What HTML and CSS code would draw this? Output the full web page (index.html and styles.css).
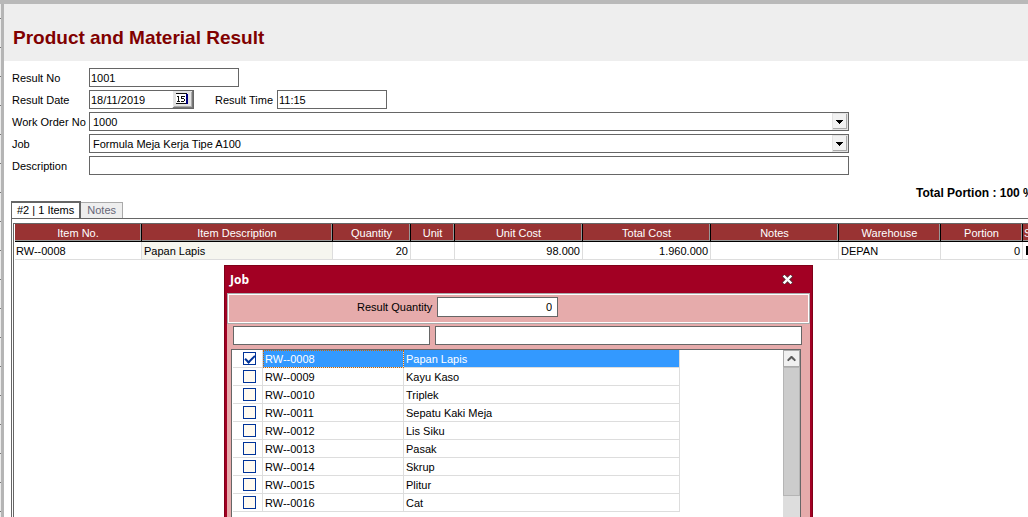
FILE: index.html
```html
<!DOCTYPE html>
<html lang="id">
<head>
<meta charset="utf-8">
<title>Product and Material Result</title>
<link rel="stylesheet" href="styles.css">
</head>
<body>
<div class="window">
  <header class="heading"><h1>Product and Material Result</h1></header>
  <main class="content">
    <form class="form">
      <div class="row">
        <label class="label" for="no">Result No</label>
        <input class="field field-no" id="no" value="1001">
      </div>
      <div class="row">
        <label class="label" for="date">Result Date</label>
        <div class="date">
          <input class="field" id="date" value="18/11/2019">
          <button class="calendar" type="button" aria-label="Pick date">
            <svg width="21" height="17" viewBox="0 0 21 17" shape-rendering="crispEdges">
              <path d="M0 0h21v17H0z" fill="#e4e4e4"/>
              <path d="M0 0h1v16H0z" fill="#fff"/>
              <path d="M20 0h1v17H1v-1h19z" fill="#777"/>
              <path d="M19 1h1v15H2v-1h17z" fill="#aaa"/>
              <path d="M4 2h10v10H4z" fill="#fff"/>
              <path d="M4 2h11v1H4zM4 12h11v1H4z" fill="#111"/>
              <path d="M14 3h2v10h-2z" fill="#000080"/>
              <path d="M6 5h1v5h1v1H5v-1h1V6H5V5zM9 5h4v1h-3v1h2v1h1v2h-1v1H9v-1h3V8H9z" fill="#111"/>
            </svg>
          </button>
        </div>
        <label class="label-time" for="time">Result Time</label>
        <input class="field field-time" id="time" value="11:15">
      </div>
      <div class="row">
        <label class="label" for="order">Work Order No</label>
        <div class="combo">
          <select class="field" id="order"><option>1000</option></select>
          <svg class="arrow" width="16" height="17" viewBox="0 0 16 17" shape-rendering="crispEdges"><path d="M0 0h16v17H0z" fill="#e3e3e3"/><path d="M1 1h13v14H1z" fill="#f2f2f2"/><path d="M14 1h1v15H1v-1h13z" fill="#aaa"/><path d="M4 7h7v1h-1v1H9v1H8v1H7v-1H6V9H5V8H4z" fill="#000"/></svg>
        </div>
      </div>
      <div class="row">
        <label class="label" for="job">Job</label>
        <div class="combo">
          <select class="field" id="job"><option>Formula Meja Kerja Tipe A100</option></select>
          <svg class="arrow" width="16" height="17" viewBox="0 0 16 17" shape-rendering="crispEdges"><path d="M0 0h16v17H0z" fill="#e3e3e3"/><path d="M1 1h13v14H1z" fill="#f2f2f2"/><path d="M14 1h1v15H1v-1h13z" fill="#aaa"/><path d="M4 7h7v1h-1v1H9v1H8v1H7v-1H6V9H5V8H4z" fill="#000"/></svg>
        </div>
      </div>
      <div class="row">
        <label class="label" for="desc">Description</label>
        <input class="field field-wide" id="desc">
      </div>
    </form>
    <p class="total">Total Portion : 100 %</p>
    <div class="tabs" role="tablist">
      <button class="tab tab-active" role="tab" aria-selected="true">#2 | 1 Items</button>
      <button class="tab" role="tab" aria-selected="false">Notes</button>
    </div>
    <section class="panel">
      <div class="grid">
        <table class="items">
          <colgroup><col class="c-no"><col class="c-desc"><col class="c-qty"><col class="c-unit"><col class="c-cost"><col class="c-cost"><col class="c-cost"><col class="c-wh"><col class="c-portion"><col class="c-last"></colgroup>
          <thead><tr><th>Item No.</th><th>Item Description</th><th>Quantity</th><th>Unit</th><th>Unit Cost</th><th>Total Cost</th><th>Notes</th><th>Warehouse</th><th>Portion</th><th class="cut">S</th></tr></thead>
          <tbody><tr><td>RW--0008</td><td class="tint">Papan Lapis</td><td class="num">20</td><td></td><td class="num">98.000</td><td class="num">1.960.000</td><td></td><td>DEPAN</td><td class="num">0</td><td><span class="mark"></span></td></tr></tbody>
        </table>
      </div>
    </section>
  </main>
</div>

<div class="dialog" role="dialog" aria-labelledby="dialog-title">
  <div class="titlebar">
    <h2 id="dialog-title">Job</h2>
    <button class="close" aria-label="Close">
      <svg width="11" height="9" viewBox="0 0 11 9"><path d="M2.500 1.500l6 6M8.500 1.500l-6 6" stroke="#53303a" stroke-width="4" stroke-linecap="square"/><path d="M2.500 1.500l6 6M8.500 1.500l-6 6" stroke="#fff" stroke-width="2.400" stroke-linecap="square"/></svg>
    </button>
  </div>
  <div class="dialog-body">
    <div class="quantity">
      <label for="qty">Result Quantity</label>
      <input class="field field-qty" id="qty" value="0">
    </div>
    <div class="filters">
      <input class="field filter-code" aria-label="Filter item number">
      <input class="field filter-name" aria-label="Filter description">
    </div>
    <div class="list">
      <table class="choices">
        <colgroup><col class="k-check"><col class="k-code"><col class="k-name"></colgroup>
        <tbody>
          <tr class="selected"><td><input type="checkbox" id="i8" checked></td><td class="focus"><label for="i8">RW--0008</label></td><td>Papan Lapis</td></tr>
          <tr><td><input type="checkbox" id="i9"></td><td><label for="i9">RW--0009</label></td><td>Kayu Kaso</td></tr>
          <tr><td><input type="checkbox" id="i10"></td><td><label for="i10">RW--0010</label></td><td>Triplek</td></tr>
          <tr><td><input type="checkbox" id="i11"></td><td><label for="i11">RW--0011</label></td><td>Sepatu Kaki Meja</td></tr>
          <tr><td><input type="checkbox" id="i12"></td><td><label for="i12">RW--0012</label></td><td>Lis Siku</td></tr>
          <tr><td><input type="checkbox" id="i13"></td><td><label for="i13">RW--0013</label></td><td>Pasak</td></tr>
          <tr><td><input type="checkbox" id="i14"></td><td><label for="i14">RW--0014</label></td><td>Skrup</td></tr>
          <tr><td><input type="checkbox" id="i15"></td><td><label for="i15">RW--0015</label></td><td>Plitur</td></tr>
          <tr><td><input type="checkbox" id="i16"></td><td><label for="i16">RW--0016</label></td><td>Cat</td></tr>
        </tbody>
      </table>
      <div class="scrollbar">
        <button class="up" aria-label="Scroll up"><svg width="9" height="7" viewBox="0 0 9 7"><path d="M1 6V4.500L4.500 1 8 4.500V6L4.500 3z" fill="#555" stroke="#555"/></svg></button>
        <div class="thumb"></div>
      </div>
    </div>
  </div>
</div>
</body>
</html>
```

FILE: styles.css
```css
* { box-sizing: border-box; }
body {
  margin: 0;
  height: 100vh;
  overflow: hidden;
  position: relative;
  background: #fff;
  color: #000;
  font: 11px/14px "Liberation Sans", Arial, sans-serif;
}
input, select, button { font: inherit; color: inherit; margin: 0; border-radius: 0; }
.window {
  height: 100%;
  display: flex;
  flex-direction: column;
  border-top: 4px solid #b9b9b9;
  padding-left: 4px;
  background:
    repeating-linear-gradient(#ececec 0 14px, #777 14px 15px, #ececec 15px 29px) left / 1px 100% no-repeat,
    linear-gradient(#b5b5b5, #b5b5b5) left / 4px 100% no-repeat;
}
.heading { background: #eee; padding: 22px 9px 11px; }
.heading h1 { margin: 0; font: bold 19px/24px "Liberation Sans", Arial, sans-serif; color: #800000; }
.content { flex: 1; display: flex; flex-direction: column; padding: 7px 0 0 7px; background: #fff; }
.form { display: flex; flex-direction: column; gap: 3px; padding-left: 1px; }
.row { display: flex; align-items: center; }
.label { width: 77px; white-space: nowrap; }
.label-time { width: 62px; margin-left: 21px; white-space: nowrap; }
.field {
  display: block;
  width: 100%;
  height: 19px;
  padding: 0 3px;
  border: 1px solid #666;
  background: #fff;
  appearance: none;
  outline: 0;
}
.field-no, .date .field { padding: 0 1px; }
.field-no { width: 150px; }
.date { position: relative; width: 105px; }
.calendar { position: absolute; right: 1px; top: 1px; padding: 0; border: 0; background: none; }
.calendar svg, .arrow, .close svg, .up svg { display: block; }
.field-time { width: 110px; padding: 0 1px; }
.combo { position: relative; width: 760px; }
.field-wide { width: 760px; }
.arrow { position: absolute; right: 1px; top: 1px; pointer-events: none; }
.total { margin: 11px 0 0 905px; white-space: nowrap; font: bold 12px/14px "Liberation Sans", Arial, sans-serif; }
.tabs { display: flex; align-items: flex-end; margin-top: 1px; }
.tab { height: 16px; padding: 0 6px; border: 1px solid #aaa; border-width: 1px 1px 0 0; background: #eee; color: #667; line-height: 15px; }
.tab-active { height: 17px; padding: 0 5px; border: 1px solid #666; border-width: 2px 2px 0 1px; background: #fff; color: #000; }
.panel { flex: 1; border: 1px solid #666; border-width: 1px 0 0 1px; padding: 4px 0 0 1px; }
.grid { height: 100%; border: 1px solid #666; border-width: 1px 0 0 1px; padding: 0 0 0 1px; overflow: hidden; }
.items { width: 1037px; table-layout: fixed; border-collapse: separate; border-spacing: 0; }
.items th { height: 18px; padding: 0; background: #933; color: #fff; font-weight: normal; border-right: 1px solid #000; border-bottom: 1px solid #000; box-shadow: inset -1px -1px #999; }
.items td { height: 18px; padding: 0 2px 0 1px; border: 1px solid #ddd; border-width: 0 1px 1px 0; white-space: nowrap; }
.items td.tint, .items td:nth-child(8) { padding-left: 2px; }
.items .cut { text-align: left; padding-left: 1px; }
.items .num { text-align: right; }
.items .tint { background: #f6f6ef; }
.mark { display: block; width: 8px; height: 9px; margin-left: 2px; background: #000; }
.c-no { width: 127px; } .c-desc { width: 191px; } .c-qty { width: 78px; } .c-unit { width: 44px; }
.c-cost { width: 128px; } .c-wh { width: 102px; } .c-portion { width: 82px; } .c-last { width: 29px; }

.dialog {
  position: absolute;
  left: 224px;
  top: 265px;
  bottom: 0;
  width: 589px;
  display: flex;
  flex-direction: column;
  border: 1px solid #800018;
  border-bottom: 0;
  padding: 0 2px;
  background: #a20023;
}
.titlebar { display: flex; justify-content: space-between; align-items: center; height: 27px; padding: 0 17px 0 3px; }
.titlebar h2 { margin: 0; font: bold 12px/16px "Open Sans", sans-serif; color: #fff; }
.close { padding: 0; border: 0; background: none; }
.dialog-body { flex: 1; min-height: 0; display: flex; flex-direction: column; background: #e6abab; }
.quantity { display: flex; align-items: center; gap: 6px; height: 31px; padding: 0 0 3px 129px; border: 1px solid #aaa; box-shadow: inset 0 0 0 1px #fff; }
.quantity label { width: 74px; text-align: right; white-space: nowrap; }
.field-qty { width: 121px; height: 20px; padding: 0 5px; text-align: right; }
.filters { display: flex; gap: 5px; padding: 2px 8px 4px 6px; }
.filter-code { width: 197px; }
.filter-name { flex: 1; }
.list { flex: 1; min-height: 0; display: flex; justify-content: space-between; align-items: flex-start; margin: 0 9px 0 4px; padding: 0 0 0 1px; border: 1px solid #666; border-bottom: 0; background: #fff; overflow: hidden; }
.choices { width: 447px; table-layout: fixed; border-collapse: separate; border-spacing: 0; }
.choices td { height: 18px; padding: 0 2px; border: 1px solid #ddd; border-width: 0 1px 1px 0; white-space: nowrap; }
.choices td:first-child { padding: 0 0 0 10px; }
.selected td + td { background: #39f; color: #fff; }
.choices .focus { outline: 1px dotted #c60; outline-offset: -1px; }
.k-check { width: 30px; } .k-code { width: 141px; } .k-name { width: 276px; }
.choices input { appearance: none; display: block; width: 13px; height: 13px; border: 1px solid #039; background: #fffaf0; }
.choices input:checked { background: #fff; }
.choices input:checked::after { content: ""; display: block; width: 8px; height: 4px; margin: 2px 0 0 1px; border: solid #039; border-width: 0 0 2px 2px; transform: rotate(-45deg); }
.scrollbar { align-self: stretch; width: 17px; background: #ddd; }
.up { display: flex; align-items: center; justify-content: center; width: 17px; height: 17px; padding: 0; border: 1px solid #aaa; background: #f0f0f0; }
.thumb { height: 129px; border: 1px solid #b5b5b5; background: #ccc; }
```
